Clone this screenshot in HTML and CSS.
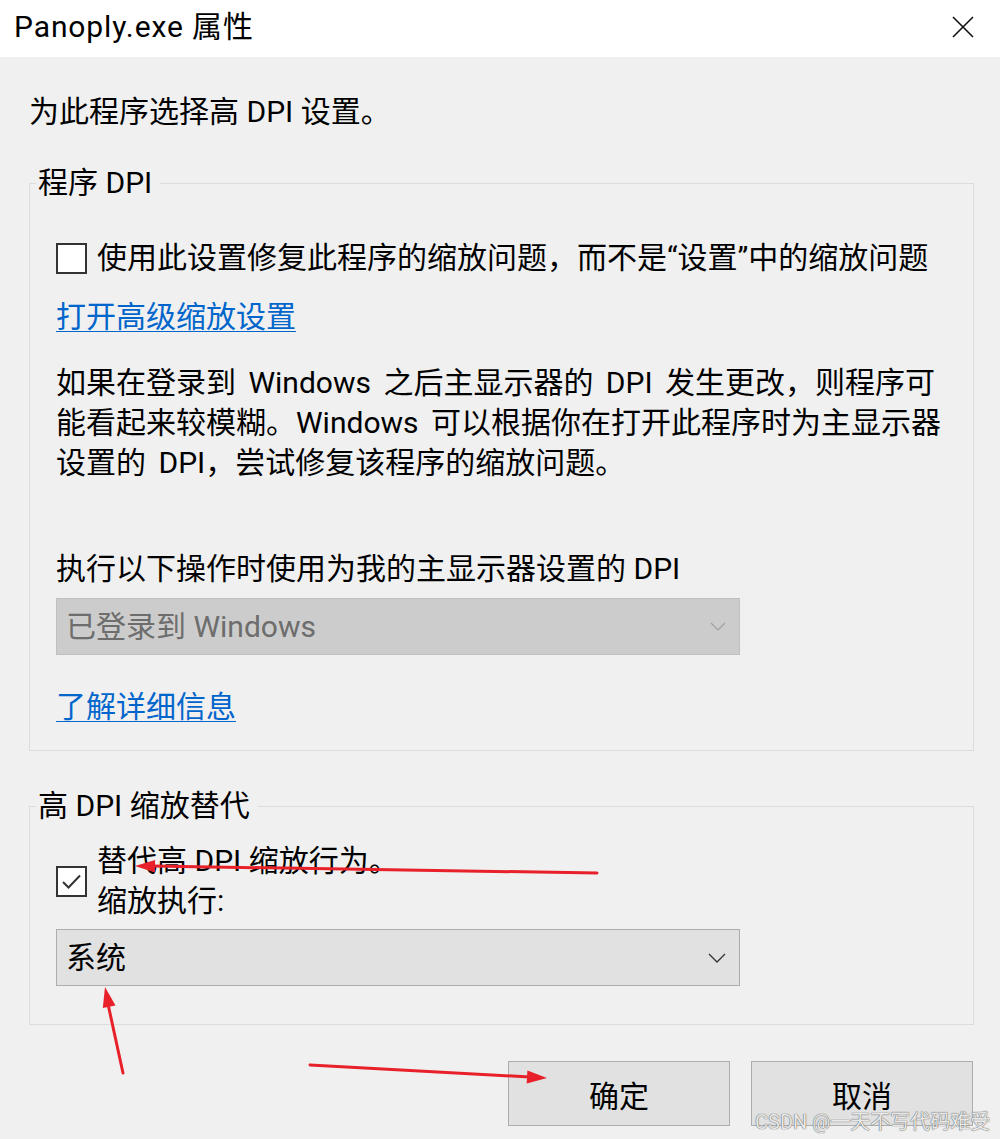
FILE: index.html
```html
<!DOCTYPE html>
<html lang="zh-CN">
<head>
  <meta charset="UTF-8">
  <title>Panoply.exe 属性</title>
  <link rel="stylesheet" href="styles.css">
</head>
<body>
  <div class="titlebar">
    <span class="title">Panoply.exe 属性</span>
    <svg class="close" width="22" height="22" viewBox="0 0 22 22">
      <path d="M1 1 L21 21 M21 1 L1 21" stroke="#111" stroke-width="1.6" fill="none"/>
    </svg>
  </div>

  <div class="content">
    <p class="intro">为此程序选择高 DPI 设置。</p>

    <fieldset class="group">
      <legend>程序 DPI</legend>
      <div class="group-body first">
        <div class="check-row">
          <span class="checkbox"></span>
          <span>使用此设置修复此程序的缩放问题，而不是“设置”中的缩放问题</span>
        </div>
        <a class="link link-top" href="#">打开高级缩放设置</a>
        <p class="desc">如果在登录到 Windows 之后主显示器的 DPI 发生更改，则程序可<br>能看起来较模糊。Windows 可以根据你在打开此程序时为主显示器<br>设置的 DPI，尝试修复该程序的缩放问题。</p>
        <p class="label">执行以下操作时使用为我的主显示器设置的 DPI</p>
        <div class="select disabled">
          <span>已登录到 Windows</span>
          <svg width="16" height="10" viewBox="0 0 16 10"><path d="M1 1 L8 8 L15 1" stroke="#a0a0a0" stroke-width="1.2" fill="none"/></svg>
        </div>
        <a class="link link-more" href="#">了解详细信息</a>
      </div>
    </fieldset>

    <fieldset class="group second">
      <legend>高 DPI 缩放替代</legend>
      <div class="group-body">
        <div class="check-row two-lines">
          <span class="checkbox">
            <svg width="27" height="27" viewBox="0 0 27 27"><path d="M5 14 L10.5 19.5 L22 7.5" stroke="#333" stroke-width="2" fill="none"/></svg>
          </span>
          <span>替代高 DPI 缩放行为。<br>缩放执行:</span>
        </div>
        <div class="select">
          <span>系统</span>
          <svg width="18" height="10" viewBox="0 0 18 10"><path d="M1 1 L9 9 L17 1" stroke="#333" stroke-width="1.3" fill="none"/></svg>
        </div>
      </div>
    </fieldset>

    <div class="buttons">
      <button class="btn">确定</button>
      <button class="btn">取消</button>
    </div>
  </div>

  <!-- red annotation arrows drawn over the dialog -->
  <svg class="arrows" width="1000" height="1139" viewBox="0 0 1000 1139">
    <g stroke="#e8202a" stroke-width="3" fill="none" stroke-linecap="round">
      <line x1="597" y1="873" x2="152" y2="866"/>
      <line x1="123" y1="1073" x2="108" y2="1004"/>
      <line x1="310" y1="1065" x2="530" y2="1077"/>
    </g>
    <g fill="#e8202a">
      <polygon points="135,866 155.1,860 154.9,872.5"/>
      <polygon points="105,987 115.5,1005.4 102.8,1008"/>
      <polygon points="547,1078 526.7,1083.4 527.4,1070.4"/>
    </g>
  </svg>

  <div class="watermark">CSDN @一天不写代码难受</div>
</body>
</html>
```

FILE: styles.css
```css
* {
  margin: 0;
  padding: 0;
  box-sizing: border-box;
}

body {
  position: relative;
  width: 1000px;
  height: 1139px;
  overflow: hidden;
  background: #f0f0f0;
  font-family: Roboto, "Noto Sans CJK SC", sans-serif;
  font-size: 30px;
  line-height: 40px;
  color: #000;
}

.titlebar {
  height: 57px;
  background: #fff;
  display: flex;
  align-items: center;
  justify-content: space-between;
  padding: 0 26px 4px 14px;
}

.title {
  font-size: 30px;
  letter-spacing: 0.9px;
}

.content {
  padding: 0 26px 0 29px;
}

.intro {
  margin-top: 35px;
}

.group {
  border: 1px solid #dcdcdc;
  margin-top: 31px;
  padding: 0;
  min-width: 0;
}

.group.second {
  margin-top: 35px;
}

.group legend {
  margin-left: 6px;
  padding: 0 8px 0 2px;
}

.group-body {
  padding: 15px 0 38px 26px;
}

.group-body.first {
  padding: 35px 0 23px 26px;
}

.check-row {
  display: flex;
  align-items: center;
  gap: 10px;
  white-space: nowrap;
}

.checkbox {
  width: 31px;
  height: 31px;
  border: 2px solid #333;
  background: #fff;
  display: flex;
  align-items: center;
  justify-content: center;
  flex-shrink: 0;
}

.link {
  display: block;
  width: max-content;
  color: #0066cc;
  text-decoration: underline;
  text-underline-offset: 4px;
  text-decoration-thickness: 1px;
}

.link-top {
  margin-top: 19px;
}

.desc {
  margin-top: 26px;
  white-space: nowrap;
  word-spacing: 5px;
}

.label {
  margin-top: 66px;
}

.select {
  width: 684px;
  height: 57px;
  margin-top: 9px;
  border: 1px solid #adadad;
  background: #e1e1e1;
  display: flex;
  align-items: center;
  justify-content: space-between;
  padding: 0 13px 0 9px;
}

.select.disabled {
  background: #cccccc;
  border-color: #bfbfbf;
  color: #6d6d6d;
}

.link-more {
  margin-top: 32px;
}

.two-lines + .select {
  margin-top: 8px;
}

.buttons {
  display: flex;
  justify-content: flex-end;
  gap: 21px;
  margin-top: 36px;
  padding-right: 1px;
}

.btn {
  width: 222px;
  height: 65px;
  border: 1px solid #adadad;
  background: #e1e1e1;
  font-family: inherit;
  font-size: 30px;
  color: #000;
}

.arrows {
  position: absolute;
  left: 0;
  top: 0;
  pointer-events: none;
}

.watermark {
  position: absolute;
  left: 755px;
  top: 1107px;
  font-size: 20px;
  line-height: 30px;
  color: #e8e8e8;
  text-shadow: 0 0 1px #555, 0 0 1px #777;
  white-space: nowrap;
}
```
